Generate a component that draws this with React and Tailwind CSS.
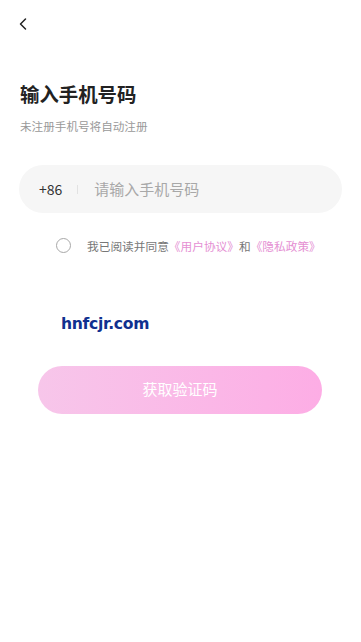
import { ChevronLeft } from 'lucide-react'

const FONT = { fontFamily: '"Noto Sans CJK SC", "Noto Sans", sans-serif' }

export default function App() {
  return (
    <div className="w-[361px] h-[642px] bg-white relative overflow-hidden" style={FONT}>
      {/* back */}
      <div className="pt-[14px] pl-[13px] h-[44px]">
        <ChevronLeft size={20} strokeWidth={1.8} className="text-[#222]" />
      </div>

      {/* heading */}
      <div className="px-5 mt-[35px]">
        <h1 className="text-[19.4px] font-bold text-[#222] leading-[30px]">输入手机号码</h1>
        <p className="text-[11.6px] text-[#999] mt-[8px] leading-[18px]">未注册手机号将自动注册</p>
      </div>

      {/* phone input */}
      <div className="mx-[19px] mt-[30px] h-[48px] rounded-full bg-[#f6f6f6] flex items-center pl-5 w-[323px]">
        <span className="text-[14px] text-[#333]">+86</span>
        <span className="w-px h-[9px] bg-[#e2e2e2] ml-[15px] mr-[16px]" />
        <span className="text-[15px] text-[#a8a8a8]">请输入手机号码</span>
      </div>

      {/* agreement */}
      <div className="flex items-center mt-[24px] pl-[56px]">
        <span className="w-[15px] h-[15px] rounded-full border border-[#a8a8a8] mr-[16px]" />
        <span className="text-[11.7px] text-[#777]">
          我已阅读并同意<span className="text-[#e58fd3]">《用户协议》</span>和<span className="text-[#e58fd3]">《隐私政策》</span>
        </span>
      </div>

      {/* watermark */}
      <div className="pl-[61px] mt-[55px] h-[30px] flex items-center">
        <span
          className="text-[15.6px] font-bold text-[#10308f] tracking-[-0.3px]"
          style={{ fontFamily: '"DejaVu Sans", sans-serif' }}
        >
          hnfcjr.com
        </span>
      </div>

      {/* button */}
      <div className="mx-[38px] mt-[26px] h-[48px] w-[284px] rounded-full bg-gradient-to-r from-[#f7c6ea] to-[#fdade5] flex items-center justify-center">
        <span className="text-[15px] text-white">获取验证码</span>
      </div>
    </div>
  )
}
